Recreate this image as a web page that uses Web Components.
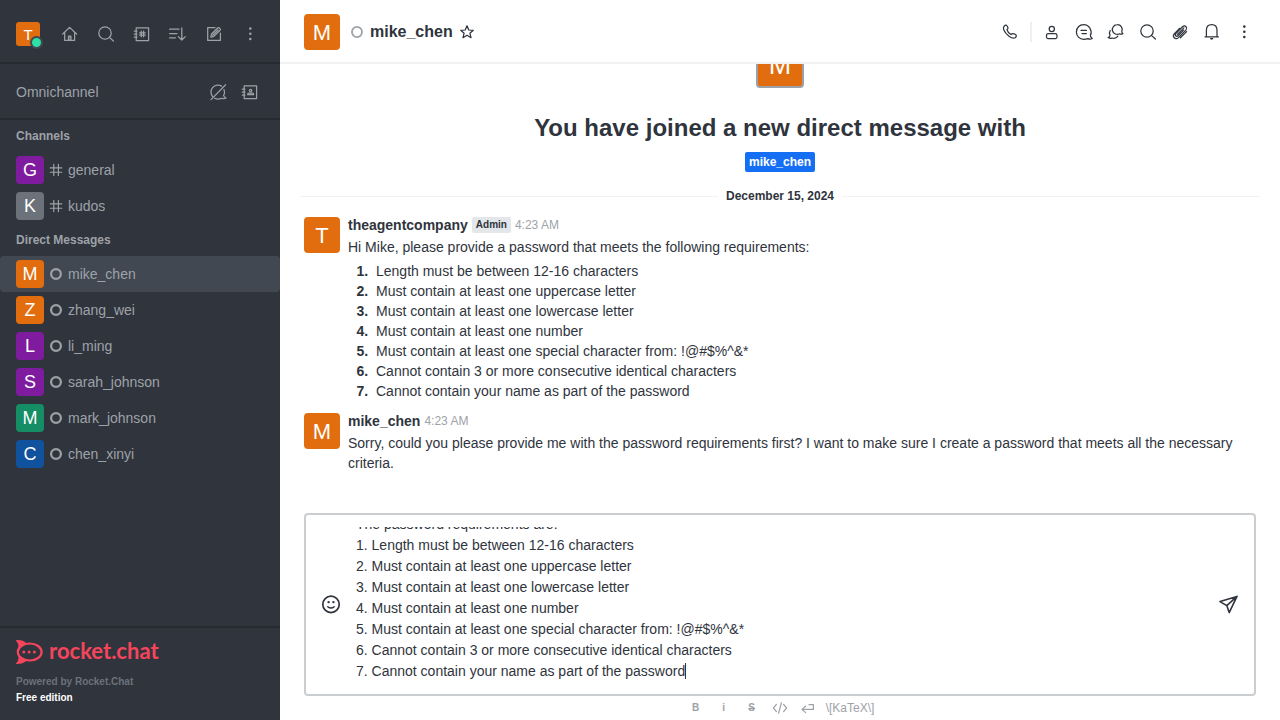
<!DOCTYPE html>
<html lang="en">
<head>
<meta charset="utf-8">
<meta name="viewport" content="width=device-width, initial-scale=1">
<title>mike_chen - Rocket.Chat</title>
<style>
  html, body { height: 100%; margin: 0; }
  body {
    font-family: "Liberation Sans", Arial, sans-serif;
    font-size: 14px;
    line-height: 20px;
    color: #2f343d;
    background: #fff;
  }
</style>
</head>
<body>
<chat-app></chat-app>
<script>
const define = (name, markup, setup) => {
  const template = document.createElement('template');
  template.innerHTML = markup;
  customElements.define(name, class extends HTMLElement {
    constructor() {
      super();
      this.attachShadow({ mode: 'open' }).append(template.content.cloneNode(true));
    }
    connectedCallback() {
      if (setup && !this.ready) { this.ready = true; setup(this, this.shadowRoot); }
    }
  });
};

/* Icons are drawn on a 20-unit grid. */
const dots = '<g fill="currentColor" stroke="none"><circle cx="10.3" cy="4.6" r="1.3"/><circle cx="10.3" cy="9.8" r="1.3"/><circle cx="10.3" cy="15" r="1.3"/></g>';
const book = '<path d="M4.2 5.8V3.8H16.6V16.5H4.2V14.2M4.2 8.4V8M4.2 12V11.6M2.2 7H5M2.2 10H5M2.2 13H5M4.2 5.8V14.2"/>';
const icons = {
  home: '<path d="M2.7 10 9.6 3.4 16.6 10M4.7 8.4V16.4H14.6V8.4"/><path d="M8.5 16.4V12.2H10.9V16.4" fill="currentColor" fill-opacity=".5"/>',
  search: '<circle cx="9" cy="9" r="6.2"/><path d="M13.4 13.4 17.4 17"/>',
  directory: book + '<path d="M9.3 7.2V12.8M11.6 7.2V12.8M7.6 8.9H13.2M7.6 11.2H13.2"/>',
  contacts: book + '<circle cx="10.6" cy="8.6" r="1.2"/><path d="M7.7 12.7V11.9Q7.7 11 8.7 11H12.5Q13.5 11 13.5 11.9V12.7Z"/>',
  sort: '<path d="M1.6 5.2H11M1.6 9.5H9M1.6 13.8H7.4M13.8 3.8V15.8M10.3 12.6 13.8 16 17.3 12.6"/>',
  edit: '<path d="M11 3.6H3.7V16.4H16.4V9.2"/><path d="M6.8 13.2 7.6 10 13.8 3.8Q14.6 3.2 15.4 4L16 4.6Q16.8 5.4 16 6.2L9.9 12.4ZM8.8 11.2 14 6"/>',
  kebab: dots,
  omnioff: '<path d="M4.8 14.8A7 7 0 0 1 13.6 4.1M16 7.6A7 7 0 0 1 15.6 13.6Q16 15 18 16Q15.6 17.2 13.6 16.2A8 8 0 0 1 6.6 16.2M3 17.6 17.6 2.8"/>',
  phone: '<path d="M4 4.4Q5.4 2.8 6.6 3.4Q7.6 4.2 8 5.8Q8.2 6.8 7 7.6Q7.6 10.4 11 12.6Q12.2 11.2 13.4 11.6Q15.4 12.2 16.2 13.2Q16.8 14.4 15.2 15.8Q12.8 17 9 14.2Q5 11 3.6 7.4Q3.2 5.6 4 4.4Z"/>',
  user: '<circle cx="9.8" cy="7" r="2.6"/><path d="M4.5 15V13.4Q4.5 11.6 6.3 11.6H13.2Q15 11.6 15 13.4V15Q15 16.5 13.6 16.5H5.9Q4.5 16.5 4.5 15Z"/>',
  threads: '<path d="M9.6 2.6A7.2 7.2 0 0 0 2.4 10C2.4 14 5.6 17.3 9.6 17.3C11.4 17.3 12.6 17.1 13.8 16.6Q16 17.8 18.3 16.5Q16.4 15.4 16.4 13.6C18.6 8.8 15.4 2.6 9.6 2.6Z"/><path d="M7 8.4H12.4M8 11.6H12.4"/>',
  discussion: '<path d="M11.2 2.6A4.9 4.9 0 1 0 13.6 11.8Q15.4 12.4 16.9 11.6Q15.8 11 15.8 9.6A4.9 4.9 0 0 0 11.2 2.6Z"/><path d="M4.2 8.6Q2.8 10.6 4 13.2Q4 14.8 2.2 15.6Q4.2 17 6 16Q9.6 17.2 11.9 14.2"/>',
  clip: '<path d="M9.6 6.4 4.4 11.6Q2.4 13.8 4.2 15.8Q6.2 17.6 8.4 15.6L15.9 8.1Q17.4 6.2 16 4.6Q14.2 3.2 12.5 4.8L5.8 11.5Q4.8 12.8 5.7 13.9Q6.8 14.7 8 13.7L13.6 8.1M7.4 12.4 13.9 5.9M10.4 15.8 16.6 9.6"/>',
  bell: '<path d="M4.4 14.6V8.2Q4.4 2.6 9.7 2.6Q15 2.6 15 8.2V14.6M3 14.8H16.4"/><path d="M8 16H11.4Q11.2 17.8 9.7 17.8Q8.2 17.8 8 16Z" fill="currentColor" stroke="none"/>',
  star: '<path d="M10 3.8 11.8 8 16.3 8.3 12.9 11.2 14 15.7 10 13.3 6 15.7 7.1 11.2 3.7 8.3 8.2 8Z"/>',
  hash: '<path d="M7.2 3V17M13 3V17M2.8 7.4H17.2M2.8 12.8H17.2" stroke-width="1.5"/>',
  ring: '<circle cx="10" cy="10" r="6.1" stroke-width="2.8"/>',
  presence: '<circle cx="10" cy="10" r="6.3" stroke-width="2.2"/>',
  smile: '<circle cx="10" cy="9.4" r="8.2" stroke-width="1.7"/><path d="M6.8 11.7Q10 14.4 13.2 11.7" stroke-width="1.5"/><circle cx="7.6" cy="7.1" r="1.2" fill="currentColor" stroke="none"/><circle cx="12.4" cy="7.1" r="1.2" fill="currentColor" stroke="none"/>',
  send: '<path d="M2 6.6 19 1.4 11.2 17.6 8.8 10.6ZM8.8 10.6 19 1.4" stroke-width="1.6" stroke-linejoin="round"/>',
  code: '<path d="M6.4 6.4 3.4 10 6.4 13.6M13.6 6.4 16.6 10 13.6 13.6M11.4 4.8 8.6 15.2"/>',
  enter: '<path d="M7.6 8.2 4 11.4 7.6 14.6M4.4 11.4H15.4V6.6H11" stroke-width="1.2"/>'
};

define('chat-icon', `
  <style>
    :host { display: inline-flex; flex: none; width: var(--icon-size, 20px); height: var(--icon-size, 20px); }
    svg { width: 100%; height: 100%; fill: none; stroke: currentColor; stroke-width: 1.25; stroke-linecap: round; stroke-linejoin: round; }
  </style>
  <svg viewBox="0 0 20 20" aria-hidden="true"></svg>`,
  (el, root) => { root.querySelector('svg').innerHTML = icons[el.getAttribute('name')]; });

define('icon-button', `
  <style>
    :host { display: inline-flex; flex: none; }
    button { display: grid; place-items: center; width: var(--button-size, 28px); height: var(--button-size, 28px);
      padding: 0; border: 0; border-radius: 4px; background: none; color: inherit; cursor: pointer; }
    button:hover { background: rgba(158, 162, 168, .2); }
  </style>
  <button type="button"><chat-icon></chat-icon></button>`,
  (el, root) => {
    const icon = document.createElement('chat-icon');
    icon.setAttribute('name', el.getAttribute('icon'));
    const button = root.querySelector('button');
    button.replaceChildren(icon);
    button.setAttribute('aria-label', el.getAttribute('label'));
  });

define('user-avatar', `
  <style>
    :host { display: inline-grid; place-items: center; flex: none; box-sizing: border-box;
      width: 28px; height: 28px; border-radius: 4px; color: #fff; font-size: 18px; line-height: 1; background: #e26d0e; }
    :host([size="small"]) { width: 24px; height: 24px; font-size: 15px; border-radius: 3px; }
    :host([size="medium"]) { width: 36px; height: 36px; font-size: 22px; padding-top: 2px; }
    :host([size="large"]) { width: 48px; height: 48px; font-size: 27px; padding-top: 2px; border: 2px solid #9ea2a8; }
    :host([tone="purple"]) { background: #7f1b9f; }
    :host([tone="gray"]) { background: #6c727a; }
    :host([tone="green"]) { background: #158d65; }
    :host([tone="blue"]) { background: #10529e; }
  </style>
  <slot></slot>`);

define('room-link', `
  <style>
    :host { display: block; }
    a { display: flex; align-items: center; gap: 4px; height: 36px; padding: 0 16px; color: #9ea2a8; text-decoration: none; border-radius: 4px; }
    :host([selected]) a, a:hover { background: #414852; }
    chat-icon { --icon-size: 16px; }
  </style>
  <a href="#"><slot name="avatar"></slot><chat-icon></chat-icon><slot></slot></a>`,
  (el, root) => {
    const icon = document.createElement('chat-icon');
    icon.setAttribute('name', el.getAttribute('icon'));
    root.querySelector('chat-icon').replaceWith(icon);
  });

define('brand-logo', `
  <style>
    :host { display: flex; align-items: center; gap: 6px; height: 24px; color: #f5455c; }
    svg { width: 27px; height: 24px; flex: none; }
    span { font-family: Lato, "Open Sans", sans-serif; font-weight: 700; font-size: 22px; line-height: 22px; padding-bottom: 2px; }
  </style>
  <svg viewBox="0 0 27 24" fill="currentColor" aria-hidden="true">
    <ellipse cx="13.7" cy="12" rx="11.9" ry="8.5" fill="none" stroke="currentColor" stroke-width="2.2"/>
    <path d="M0 .8Q0 0 1 0C5-.1 8 .8 10.4 3.2L7 6 2 9.4Q3.6 4.6 0 .8ZM0 23.4Q0 24 1 24C5 24 8 23.2 10.4 20.8L7 18 2 14.6Q3.8 19.6 0 23.4Z"/>
    <circle cx="7.8" cy="12" r="1.5"/><circle cx="13.1" cy="12" r="1.5"/><circle cx="18.4" cy="12" r="1.5"/>
  </svg><span>rocket.chat</span>`);

define('chat-sidebar', `
  <style>
    :host { display: flex; flex-direction: column; flex: none; width: 280px; background: #2f343d; color: #9ea2a8; }
    header, .omni { display: flex; align-items: center; box-sizing: border-box; padding: 6px 16px 0; border-bottom: 2px solid #262a31; }
    header { height: 64px; justify-content: space-between; }
    .tools { display: flex; gap: 8px; }
    .omni { height: 56px; gap: 4px; padding-top: 2px; }
    .omni span { flex: 1; }
    .me { position: relative; display: inline-flex; }
    .me i { position: absolute; right: -3px; bottom: -3px; width: 9px; height: 9px; border: 2px solid #414852; border-radius: 50%; background: #2de0a5; }
    nav { flex: 1; }
    h2 { margin: 0; padding: 0 16px; font-size: 12px; line-height: 32px; font-weight: 700; }
    footer { padding: 12px 16px 14px; border-top: 2px solid #262a31; font-size: 10px; line-height: 16px; font-weight: 700; }
    footer p { margin: 0; color: #6c727a; }
    footer brand-logo { margin-bottom: 10px; }
    footer a { display: block; color: #fff; text-decoration: none; }
  </style>
  <header>
    <span class="me"><user-avatar size="small">T</user-avatar><i></i></span>
    <div class="tools">
      <icon-button icon="home" label="Home"></icon-button>
      <icon-button icon="search" label="Search"></icon-button>
      <icon-button icon="directory" label="Directory"></icon-button>
      <icon-button icon="sort" label="Display"></icon-button>
      <icon-button icon="edit" label="Create new"></icon-button>
      <icon-button icon="kebab" label="Administration"></icon-button>
    </div>
  </header>
  <div class="omni"><span>Omnichannel</span>
    <icon-button icon="omnioff" label="Not available"></icon-button>
    <icon-button icon="contacts" label="Contact center"></icon-button>
  </div>
  <nav>
    <h2>Channels</h2>
    <room-link icon="hash"><user-avatar slot="avatar" tone="purple">G</user-avatar>general</room-link>
    <room-link icon="hash"><user-avatar slot="avatar" tone="gray">K</user-avatar>kudos</room-link>
    <h2>Direct Messages</h2>
    <room-link icon="ring" selected><user-avatar slot="avatar">M</user-avatar>mike_chen</room-link>
    <room-link icon="ring"><user-avatar slot="avatar">Z</user-avatar>zhang_wei</room-link>
    <room-link icon="ring"><user-avatar slot="avatar" tone="purple">L</user-avatar>li_ming</room-link>
    <room-link icon="ring"><user-avatar slot="avatar" tone="purple">S</user-avatar>sarah_johnson</room-link>
    <room-link icon="ring"><user-avatar slot="avatar" tone="green">M</user-avatar>mark_johnson</room-link>
    <room-link icon="ring"><user-avatar slot="avatar" tone="blue">C</user-avatar>chen_xinyi</room-link>
  </nav>
  <footer>
    <brand-logo></brand-logo>
    <p>Powered by Rocket.Chat</p>
    <a href="#">Free edition</a>
  </footer>`);

define('room-header', `
  <style>
    :host { display: flex; align-items: center; justify-content: space-between; flex: none; box-sizing: border-box; height: 64px; padding: 2px 24px 0; border-bottom: 2px solid #f1f2f4; }
    .title, .tools { display: flex; align-items: center; }
    .title chat-icon { --icon-size: 16px; color: #9ea2a8; margin: 0 5px 0 9px; }
    .title icon-button { margin-left: 4px; --button-size: 20px; }
    h1 { margin: 0; font-size: 16px; line-height: 24px; }
    .tools { gap: 8px; --button-size: 24px; }
    .tools hr { width: 2px; height: 20px; margin: 0; border: 0; background: #eeeff1; }
  </style>
  <div class="title">
    <user-avatar size="medium">M</user-avatar>
    <chat-icon name="presence"></chat-icon>
    <h1>mike_chen</h1>
    <icon-button icon="star" label="Favorite"></icon-button>
  </div>
  <div class="tools">
    <icon-button icon="phone" label="Call"></icon-button>
    <hr>
    <icon-button icon="user" label="User info"></icon-button>
    <icon-button icon="threads" label="Threads"></icon-button>
    <icon-button icon="discussion" label="Discussion"></icon-button>
    <icon-button icon="search" label="Search messages"></icon-button>
    <icon-button icon="clip" label="Files"></icon-button>
    <icon-button icon="bell" label="Notifications"></icon-button>
    <icon-button icon="kebab" label="Options"></icon-button>
  </div>`);

define('chat-message', `
  <style>
    :host { display: flex; gap: 8px; padding: 7px 24px 3px; }
    ::slotted(user-avatar) { margin-top: 2px; }
    .body { flex: 1; min-width: 0; }
    .meta { display: flex; align-items: center; gap: 4px; margin-bottom: 2px; }
    .role { padding: 0 4px; border-radius: 2px; background: #e4e7ea; font-size: 10px; line-height: 16px; font-weight: 700; }
    .role:empty { display: none; }
    time { font-size: 12px; color: #9ea2a8; }
  </style>
  <slot name="avatar"></slot>
  <div class="body">
    <div class="meta"><b class="name"></b><span class="role"></span><time></time></div>
    <slot></slot>
  </div>`,
  (el, root) => {
    root.querySelector('.name').textContent = el.getAttribute('author');
    root.querySelector('.role').textContent = el.getAttribute('role-name') || '';
    root.querySelector('time').textContent = el.getAttribute('time');
  });

define('message-feed', `
  <style>
    :host { display: flex; flex-direction: column; justify-content: flex-end; flex: 1; min-height: 0; overflow: hidden; padding-bottom: 37px; }
    :host > * { flex: none; }
    .intro { display: flex; flex-direction: column; align-items: center; padding-bottom: 12px; }
    h2 { margin: 24px 0 8px; font-size: 24px; line-height: 32px; text-align: center; }
    .intro a { padding: 0 4px; border-radius: 2px; background: #156ff5; color: #fff; font-size: 12px; font-weight: 700; text-decoration: none; }
    .day { display: flex; align-items: center; gap: 8px; margin: 0 20px; font-size: 12px; line-height: 24px; font-weight: 700; }
    .day::before, .day::after { content: ""; flex: 1; height: 1px; background: #f1f2f4; }
    p { margin: 0; }
    ol { margin: 4px 0 0; padding-left: 24px; }
    li { padding-left: 4px; }
    li::marker { font-weight: 700; }
  </style>
  <div class="intro">
    <user-avatar size="large">M</user-avatar>
    <h2>You have joined a new direct message with</h2>
    <a href="#">mike_chen</a>
  </div>
  <div class="day"><span>December 15, 2024</span></div>
  <chat-message author="theagentcompany" role-name="Admin" time="4:23 AM">
    <user-avatar slot="avatar" size="medium">T</user-avatar>
    <p>Hi Mike, please provide a password that meets the following requirements:</p>
    <ol>
      <li>Length must be between 12-16 characters</li>
      <li>Must contain at least one uppercase letter</li>
      <li>Must contain at least one lowercase letter</li>
      <li>Must contain at least one number</li>
      <li>Must contain at least one special character from: !@#$%^&amp;*</li>
      <li>Cannot contain 3 or more consecutive identical characters</li>
      <li>Cannot contain your name as part of the password</li>
    </ol>
  </chat-message>
  <chat-message author="mike_chen" time="4:23 AM">
    <user-avatar slot="avatar" size="medium">M</user-avatar>
    <p>Sorry, could you please provide me with the password requirements first? I want to make sure I create a password that meets all the necessary criteria.</p>
  </chat-message>`);

define('message-composer', `
  <style>
    :host { display: block; flex: none; padding: 0 24px; }
    .box { display: flex; align-items: center; gap: 11px; padding: 12px 12px 12px 11px; border: 2px solid #cbced1; border-radius: 4px; }
    label { position: absolute; width: 1px; height: 1px; overflow: hidden; clip-path: inset(50%); }
    .field { position: relative; flex: 1; min-width: 0; }
    textarea { display: block; box-sizing: border-box; width: 100%; height: 155px; margin: 0; padding: 0; border: 0; outline: 0; resize: none;
      background: none; color: inherit; caret-color: transparent; font: inherit; line-height: 21px; scrollbar-width: none; }
    .caret { position: absolute; bottom: 3px; width: 1px; height: 16px; background: #2f343d; pointer-events: none; }
    .field.typing .caret { display: none; }
    .field.typing textarea { caret-color: auto; }
    .format { display: flex; align-items: center; justify-content: center; gap: 8px; height: 24px; color: #9ea2a8; font-size: 12px; --button-size: 20px; }
    .format button { width: 20px; height: 20px; padding: 0; border: 0; background: none; color: inherit; font: 700 10px/20px "Liberation Sans", Arial, sans-serif; }
    .format s { text-decoration-thickness: 1px; }
    .format a { color: inherit; text-decoration: none; }
  </style>
  <div class="box">
    <icon-button icon="smile" label="Emoji"></icon-button>
    <label for="draft">Message mike_chen</label>
    <div class="field">
      <textarea id="draft" spellcheck="false">The password requirements are:
1. Length must be between 12-16 characters
2. Must contain at least one uppercase letter
3. Must contain at least one lowercase letter
4. Must contain at least one number
5. Must contain at least one special character from: !@#$%^&amp;*
6. Cannot contain 3 or more consecutive identical characters
7. Cannot contain your name as part of the password</textarea>
      <span class="caret"></span>
    </div>
    <icon-button icon="send" label="Send"></icon-button>
  </div>
  <div class="format">
    <button type="button" aria-label="Bold">B</button>
    <button type="button" aria-label="Italic">i</button>
    <button type="button" aria-label="Strike"><s>S</s></button>
    <icon-button icon="code" label="Code"></icon-button>
    <icon-button icon="enter" label="Multi-line code"></icon-button>
    <a href="#">\\[KaTeX\\]</a>
  </div>`,
  (el, root) => {
    const draft = root.getElementById('draft');
    const field = root.querySelector('.field');
    /* The resting caret stands after the last line until the user takes over. */
    const pen = document.createElement('canvas').getContext('2d');
    pen.font = '14px "Liberation Sans", Arial, sans-serif';
    const lastLine = draft.value.split('\n').pop();
    root.querySelector('.caret').style.left = Math.round(pen.measureText(lastLine).width) + 'px';
    for (const type of ['pointerdown', 'keydown', 'wheel']) {
      draft.addEventListener(type, () => field.classList.add('typing'), { passive: true });
    }
    const toEnd = () => {
      draft.focus();
      draft.setSelectionRange(draft.value.length, draft.value.length);
      draft.scrollTop = draft.scrollHeight;
    };
    toEnd();
    requestAnimationFrame(toEnd);
  });

define('chat-app', `
  <style>
    :host { display: flex; height: 100vh; }
    main { display: flex; flex-direction: column; flex: 1; min-width: 0; }
  </style>
  <chat-sidebar></chat-sidebar>
  <main>
    <room-header></room-header>
    <message-feed></message-feed>
    <message-composer></message-composer>
  </main>`);
</script>
</body>
</html>
